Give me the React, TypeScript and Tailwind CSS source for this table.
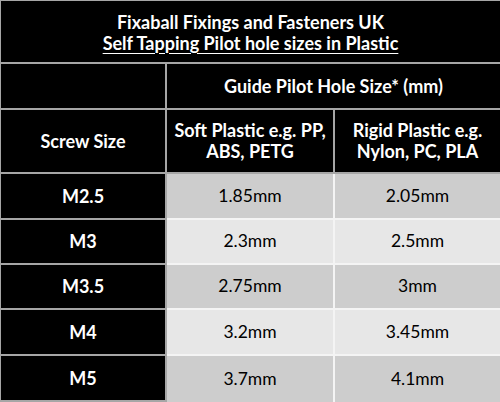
const rows = [
  { size: "M2.5", soft: "1.85mm", rigid: "2.05mm", bg: "bg-[#cdcdcd]", h: "h-[46px]" },
  { size: "M3", soft: "2.3mm", rigid: "2.5mm", bg: "bg-[#e7e7e7]", h: "h-[45px]" },
  { size: "M3.5", soft: "2.75mm", rigid: "3mm", bg: "bg-[#cdcdcd]", h: "h-[45px]" },
  { size: "M4", soft: "3.2mm", rigid: "3.45mm", bg: "bg-[#e7e7e7]", h: "h-[46px]" },
  { size: "M5", soft: "3.7mm", rigid: "4.1mm", bg: "bg-[#cdcdcd]", h: "h-[46px]" },
];

export default function App() {
  return (
    <div
      className="w-[500px] h-[402px] overflow-hidden bg-black border-t border-l border-[#a6a6a6] text-white"
      style={{ fontFamily: "Lato, 'Open Sans', sans-serif" }}
    >
      {/* title */}
      <div className="h-[63px] border-b-2 border-[#a6a6a6] flex flex-col items-center justify-center font-bold text-[18px] leading-[21px] pt-[2px]">
        <div>Fixaball Fixings and Fasteners UK</div>
        <div className="underline underline-offset-[3px] decoration-1">Self Tapping Pilot hole sizes in Plastic</div>
      </div>

      {/* guide header */}
      <div className="flex h-[46px]">
        <div className="w-[166px] border-r-2 border-b-2 border-[#a6a6a6]" />
        <div className="flex-1 border-b-2 border-[#a6a6a6] flex items-center justify-center font-bold text-[18px]">
          Guide Pilot Hole Size* (mm)
        </div>
      </div>

      {/* sub header */}
      <div className="flex h-[64px] font-bold text-[18px] leading-[21px]">
        <div className="w-[166px] border-r-2 border-b-2 border-[#a6a6a6] flex items-center justify-center">
          Screw Size
        </div>
        <div className="w-[168px] border-r-2 border-b-2 border-[#a6a6a6] flex flex-col items-center justify-center text-center">
          <div>Soft Plastic e.g. PP,</div>
          <div>ABS, PETG</div>
        </div>
        <div className="flex-1 border-b-2 border-[#a6a6a6] flex flex-col items-center justify-center text-center">
          <div>Rigid Plastic e.g.</div>
          <div>Nylon, PC, PLA</div>
        </div>
      </div>

      {/* data rows */}
      {rows.map((r, i) => (
        <div key={r.size} className={`flex ${r.h}`}>
          <div className="w-[166px] border-r-2 border-b-2 border-[#a6a6a6] flex items-center justify-center font-bold text-[18px]">
            {r.size}
          </div>
          <div
            className={`w-[168px] ${r.bg} border-r-2 border-[#f4f4f4] ${i < rows.length - 1 ? "border-b-2" : ""} flex items-center justify-center text-black text-[17.5px]`}
          >
            {r.soft}
          </div>
          <div
            className={`flex-1 ${r.bg} border-[#f4f4f4] ${i < rows.length - 1 ? "border-b-2" : ""} flex items-center justify-center text-black text-[17.5px]`}
          >
            {r.rigid}
          </div>
        </div>
      ))}
    </div>
  );
}
